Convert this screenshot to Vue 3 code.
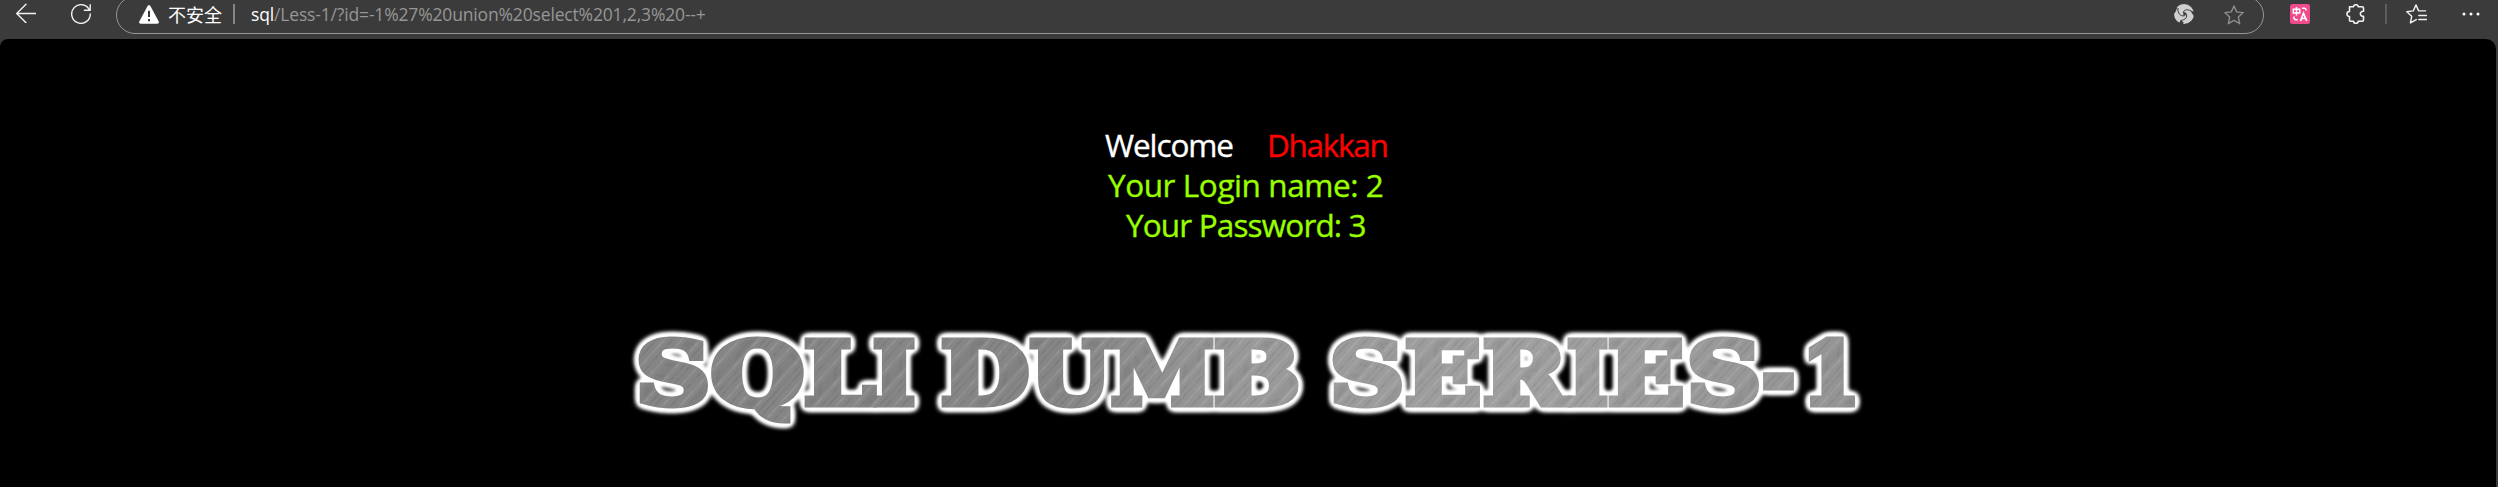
<script setup>
const letters = [
  ['S', 636, 74], ['Q', 711, 93], ['L', 804, 71], ['I', 873, 42],
  ['D', 941, 88], ['U', 1030, 81], ['M', 1111, 103], ['B', 1214, 86],
  ['S', 1330, 74], ['E', 1405, 76], ['R', 1483, 84], ['I', 1567, 41], ['E', 1608, 76], ['S', 1687, 74],
  ['-', 1762, 33], ['1', 1802, 58],
]
</script>

<template>
  <div class="browser">
    <header class="bar">
      <svg class="ico back" viewBox="0 0 20 20"><path d="M20 10.5H.7M10 1.3.7 10.5 10 19.8" /></svg>
      <svg class="ico reload" viewBox="0 0 20 20"><path d="M18.4 6A9.3 9.3 0 1 0 19.3 10M19.2.8V6.2H13.4" /></svg>
      <div class="address">
        <svg class="warn" viewBox="0 0 20 19">
          <path d="M8.6.9Q10-.7 11.4.9L19.7 16.4Q20.3 18.6 18.3 18.7H1.7Q-.3 18.6.3 16.4Z" fill="#fff" />
          <path d="M10 5.8V12M10 14v2.2" stroke="#3b3b3b" stroke-width="2" />
        </svg>
        <span class="unsafe">不安全</span>
        <i class="rule"></i>
        <span class="url"><b>sql</b>/Less-1/?id=-1%27%20union%20select%201,2,3%20--+</span>
        <svg class="swirl" viewBox="0 0 20 20">
          <circle cx="10" cy="10" r="10" fill="#cfcfcf" />
          <path d="M9.300 8.500Q11.500 7.500 12.200 9.500 12 11.800 10.300 11.800 8.800 11 9.300 8.500Z" fill="#3b3b3b" />
          <g fill="none" stroke="#3b3b3b" stroke-width="1">
            <path d="M9.500 9C9.500 6 12.500 4.500 17 7" />
            <path d="M12 9.500C14 13 11.500 16 6.500 16.500" />
            <path d="M10.500 11.800C6 12.500 3.500 9 4 4" />
          </g>
          <path d="M-1 6 3.500 2.500 2 7 0 10zM21 8l-4.500-1.500 1.500 3L20 12zM4 21l2.500-4.500 3 1.500L9 21z" fill="#3b3b3b" />
        </svg>
        <svg class="star" viewBox="0 0 20 20"><path d="M10 1 12.700 6.900 19.200 7.600 14.300 12 15.700 18.700 10 15.400 4.300 18.700 5.700 12 .8 7.600 7.300 6.900Z" /></svg>
      </div>
      <svg class="translate" viewBox="0 0 20 20">
        <rect width="20" height="20" rx="2.500" fill="#f04b8c" />
        <g fill="none" stroke="#fff" stroke-width="1.500">
          <path d="M3.300 5.200h6.400v3.700H3.300zM6.500 3v8.500M12 4.200h2.500q1.500 0 1.500 2.300M4 12.500v1.200q0 2 2.200 2h1.500" />
          <path d="M10.500 17 13.500 9.200 16.800 17M11.500 14.500h4.300" stroke-width="1.700" />
        </g>
      </svg>
      <svg class="puzzle" viewBox="0 0 20 20"><path d="M3.500 2.800H7.500C7.500 0 12.200 0 12.200 2.800H16.300Q17.500 2.800 17.500 4V7.300C13.300 7 13.300 12.600 17.500 12.300V16Q17.500 17.200 16.300 17.200H12.200C12.200 20 7.500 20 7.500 17.200H4.500Q3.500 17.200 3.500 16V12.500C.1 12.600.1 7.500 3.500 7.500Z" /></svg>
      <i class="split"></i>
      <svg class="favs" viewBox="0 0 21 20"><path d="M10.300 15.600 4.400 18.900 5.700 12.300.8 7.700 7.300 6.900 10 .9 12.600 6.900H19.500M12.800 11.500h7.700M12.800 15.500h7.700" /></svg>
      <svg class="dots" viewBox="0 0 18 4"><circle cx="2" cy="2" r="1.500" /><circle cx="9" cy="2" r="1.500" /><circle cx="16" cy="2" r="1.500" /></svg>
    </header>

    <main class="page">
      <div class="line first"><span class="welcome">Welcome</span><span class="name">Dhakkan</span></div>
      <div class="line login">Your Login name: 2</div>
      <div class="line password">Your Password: 3</div>
      <svg class="banner" viewBox="610 310 1280 130">
        <defs>
          <linearGradient id="metal" gradientUnits="userSpaceOnUse" x1="636" y1="0" x2="1860" y2="0">
            <stop offset="0" stop-color="#858585" /><stop offset=".35" stop-color="#868686" />
            <stop offset=".5" stop-color="#999" /><stop offset=".75" stop-color="#a0a0a0" />
            <stop offset="1" stop-color="#939393" />
          </linearGradient>
          <pattern id="brushed" width="43" height="140" patternUnits="userSpaceOnUse" patternTransform="rotate(42)">
            <path d="M3 0V140M17 0V140M33 0V140" stroke="#fff" stroke-opacity=".11" />
            <path d="M8 0V140M22 0V140M27 0V140M39 0V140" stroke="#000" stroke-opacity=".07" />
            <path d="M12 0V140" stroke="#000" stroke-opacity=".04" stroke-width="5" />
          </pattern>
          <filter id="glow" filterUnits="userSpaceOnUse" x="610" y="310" width="1280" height="130" color-interpolation-filters="sRGB">
            <feGaussianBlur in="SourceAlpha" stdDeviation="3.800" result="b" />
            <feComponentTransfer in="b" result="w">
              <feFuncR type="linear" slope="0" intercept="1" /><feFuncG type="linear" slope="0" intercept="1" /><feFuncB type="linear" slope="0" intercept="1" />
              <feFuncA type="linear" slope="7" intercept="-.05" />
            </feComponentTransfer>
            <feGaussianBlur in="w" stdDeviation="1" result="soft" />
            <feMerge><feMergeNode in="soft" /><feMergeNode in="SourceGraphic" /></feMerge>
          </filter>
        </defs>
        <g filter="url(#glow)">
          <g class="base">
            <text id="title" class="title" y="404"><tspan v-for="(l, i) in letters" :key="i" :x="l[1]" :textLength="l[2]" lengthAdjust="spacingAndGlyphs">{{ l[0] }}</tspan></text>
          </g>
          <use href="#title" class="grain" />
        </g>
      </svg>
    </main>
  </div>
</template>

<style>
body { background: #3b3b3b; overflow: hidden; }
</style>

<style scoped>
.browser { width: 2498px; height: 487px; background: #3b3b3b; overflow: hidden; display: flex; flex-direction: column; }
.bar { height: 39px; flex: none; display: flex; align-items: flex-start; color: #fff; }
svg { display: block; flex: none; }
.ico, .star, .puzzle, .favs { fill: none; stroke: #f2f2f2; stroke-width: 1.400; stroke-linejoin: round; stroke-linecap: round; }
.ico { width: 20px; height: 20px; }
.back { margin: 3px 0 0 16px; }
.reload { margin: 4px 0 0 35px; }
.address { box-sizing: border-box; width: 2148px; height: 38px; margin: -4px 0 0 25px; border: 1px solid #969696; border-radius: 19px; display: flex; align-items: center; padding: 0 19px 0 22px; }
.warn { width: 20px; height: 19px; margin-top: -2px; }
.unsafe { font: 18px/24px "Noto Sans CJK SC", sans-serif; width: 54px; margin-left: 9px; margin-top: -2px; white-space: nowrap; }
.rule { width: 2px; height: 20px; background: #858585; margin-left: 11px; margin-top: -2px; }
.url { font: 17.500px/24px "Open Sans", sans-serif; letter-spacing: -.16px; color: #969696; margin-left: 16px; margin-top: -2px; white-space: nowrap; }
.url b { font-weight: 400; color: #fff; }
.swirl { width: 20px; height: 20px; margin-left: auto; margin-top: -2px; }
.star { width: 20px; height: 20px; margin-left: 30px; margin-top: -1px; stroke: #8d8d8d; }
.translate { width: 20px; height: 20px; margin: 4px 0 0 26px; }
.puzzle { width: 20px; height: 20px; margin: 4px 0 0 36px; stroke-width: 1.600; }
.split { width: 2px; height: 20px; margin: 4px 0 0 19px; background: #5e5e5e; }
.favs { width: 21px; height: 20px; margin: 4px 0 0 19px; }
.dots { width: 18px; height: 4px; margin: 12px 0 0 35px; fill: #fff; }
.page { flex: 1; width: 2496px; box-sizing: border-box; background: #000; border-radius: 8px 10px 0 0; padding-top: 86px; display: flex; flex-direction: column; }
.line { font: 31.500px/40px "Open Sans", sans-serif; height: 40px; color: #99ff00; white-space: nowrap; -webkit-text-stroke: .35px currentColor; }
.first { margin-left: 1105px; display: flex; color: #fff; }
.welcome { width: 162px; letter-spacing: -1.100px; }
.name { color: #f00; letter-spacing: -1.300px; }
.login { margin-left: 1108px; letter-spacing: -.420px; }
.password { margin-left: 1126px; letter-spacing: -.850px; }
.banner { width: 1280px; height: 130px; margin: 65px 0 0 610px; }
.title { font: 700 86px "DejaVu Serif", serif; stroke-width: 7; }
.base { fill: url(#metal); stroke: url(#metal); }
.grain { fill: url(#brushed); stroke: url(#brushed); }
</style>
